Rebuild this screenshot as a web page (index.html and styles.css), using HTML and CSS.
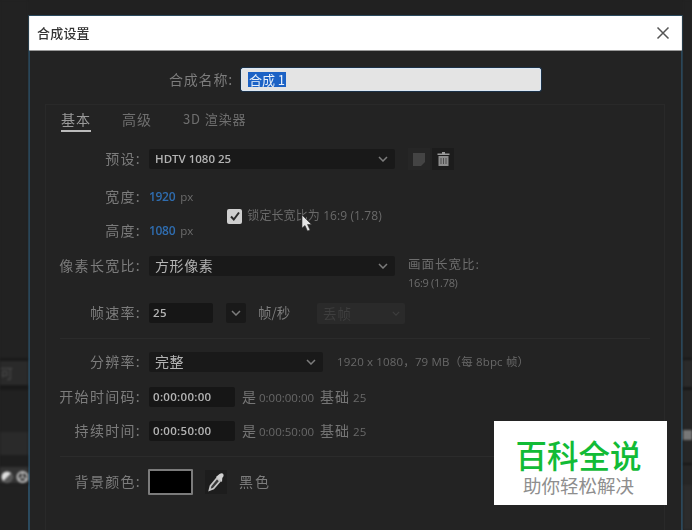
FILE: index.html
```html
<!DOCTYPE html>
<html lang="zh-CN">
<head>
<meta charset="utf-8">
<title>合成设置</title>
<link rel="stylesheet" href="styles.css">
</head>
<body>
<div class="screen">
  <aside class="strip strip-left">
    <div class="band band-a"></div>
    <div class="band band-tab"><span class="ghost">可</span></div>
    <div class="band band-b"></div>
    <div class="band band-c"></div>
    <div class="band band-d"></div>
    <div class="band band-icons">
      <svg width="28" height="16" viewBox="0 0 28 16"><circle cx="7" cy="8" r="5.500" fill="#e0e0e0"/><path d="M3.200 12 11 4.200A5.500 5.500 0 0 1 3.200 12Z" fill="#555"/><circle cx="22.500" cy="8" r="5" fill="none" stroke="#c4c4c4" stroke-width="2"/><path d="M22.500 8V3M22.500 8 18 11M22.500 8 27 11" stroke="#c4c4c4" stroke-width="1.300" fill="none"/></svg>
    </div>
  </aside>

  <main class="dialog">
    <header class="titlebar">
      <span class="title">合成设置</span>
      <svg class="close" width="14" height="14" viewBox="0 0 14 14"><path d="M1.500 1.500 12.500 12.500M12.500 1.500 1.500 12.500" stroke="#555" stroke-width="1.500" fill="none"/></svg>
    </header>

    <div class="content">
      <div class="name-row">
        <span class="label name-label">合成名称:</span>
        <div class="name-input"><span class="selected">合成 1</span></div>
      </div>

      <section class="panel">
        <nav class="tabs">
          <span class="tab tab-active">基本</span>
          <span class="tab">高级</span>
          <span class="tab tab-3d">3D 渲染器</span>
        </nav>

        <div class="row row-preset">
          <span class="label">预设:</span>
          <div class="select select-wide"><span>HDTV 1080 25</span>
            <svg class="chev" width="10" height="6" viewBox="0 0 10 6"><path d="M1 1 5 5 9 1" stroke="#7c7c7c" stroke-width="1.500" fill="none"/></svg>
          </div>
          <div class="icon-group">
            <span class="icon-btn">
              <svg width="14" height="16" viewBox="0 0 14 16"><path d="M1 2H13V11L9 15H1Z" fill="#444"/></svg>
            </span>
            <span class="icon-btn icon-btn-dark">
              <svg width="13" height="16" viewBox="0 0 13 16"><path d="M5 1H8V2.500H12.500V4H.5V2.500H5Z" fill="#9a9a9a"/><path d="M1.500 5H11.500V15H1.500Z" fill="#8c8c8c"/><path d="M4 7V13M6.500 7V13M9 7V13" stroke="#3c3c3c" stroke-width=".8"/></svg>
            </span>
          </div>
        </div>

        <div class="dims">
          <div class="dims-col">
            <div class="row">
              <span class="label">宽度:</span>
              <span class="value-blue">1920</span><span class="unit">px</span>
            </div>
            <div class="row row-height">
              <span class="label">高度:</span>
              <span class="value-blue">1080</span><span class="unit">px</span>
            </div>
          </div>
          <div class="lock">
            <span class="checkbox">
              <svg width="12" height="11" viewBox="0 0 12 11"><path d="M2 5.500 4.800 8.500 10 1.500" stroke="#2b2b2b" stroke-width="2" fill="none"/></svg>
            </span>
            <span class="lock-text">锁定长宽比为 16:9 (1.78)</span>
          </div>
        </div>

        <div class="row row-aspect">
          <span class="label">像素长宽比:</span>
          <div class="select select-wide"><span class="cjk-value">方形像素</span>
            <svg class="chev" width="10" height="6" viewBox="0 0 10 6"><path d="M1 1 5 5 9 1" stroke="#7c7c7c" stroke-width="1.500" fill="none"/></svg>
          </div>
          <div class="frame-aspect">
            <span class="frame-title">画面长宽比:</span>
            <span class="frame-value">16:9 (1.78)</span>
          </div>
        </div>

        <div class="row row-rate">
          <span class="label">帧速率:</span>
          <div class="field field-rate">25</div>
          <div class="mini-drop">
            <svg width="10" height="6" viewBox="0 0 10 6"><path d="M1 1 5 5 9 1" stroke="#7c7c7c" stroke-width="1.500" fill="none"/></svg>
          </div>
          <span class="fps">帧/秒</span>
          <div class="drop-disabled"><span>丢帧</span>
            <svg width="8" height="5" viewBox="0 0 10 6"><path d="M1 1 5 5 9 1" stroke="#3e3e3e" stroke-width="1.500" fill="none"/></svg>
          </div>
        </div>

        <div class="divider divider-one"></div>

        <div class="row row-res">
          <span class="label">分辨率:</span>
          <div class="select select-res"><span class="cjk-value">完整</span>
            <svg class="chev" width="10" height="6" viewBox="0 0 10 6"><path d="M1 1 5 5 9 1" stroke="#7c7c7c" stroke-width="1.500" fill="none"/></svg>
          </div>
          <span class="res-info">1920 x 1080，79 MB（每 8bpc 帧）</span>
        </div>

        <div class="row row-start">
          <span class="label">开始时间码:</span>
          <div class="field field-time">0:00:00:00</div>
          <span class="time-info"><b>是</b> 0:00:00:00 <b class="base">基础</b> 25</span>
        </div>

        <div class="row row-dur">
          <span class="label">持续时间:</span>
          <div class="field field-time">0:00:50:00</div>
          <span class="time-info"><b>是</b> 0:00:50:00 <b class="base">基础</b> 25</span>
        </div>

        <div class="divider divider-two"></div>

        <div class="row row-bg">
          <span class="label">背景颜色:</span>
          <div class="swatch"></div>
          <span class="dropper">
            <svg width="18" height="20" viewBox="0 0 18 20"><path d="M10 6 3.500 14 2.500 18 6.500 16.500 13 9Z" fill="#3a3a3a" stroke="#c4c4c4" stroke-width="1.800"/><path d="M9.500 4.500 12.500 2Q15 .5 16.300 2 17.500 4 15.300 6L15 10 9 5Z" fill="#cfcfcf"/></svg>
          </span>
          <span class="bg-name">黑色</span>
        </div>
      </section>
    </div>

    <svg class="cursor" width="12" height="18" viewBox="0 0 12 18"><path d="M1 1V14L4 11.500 6.500 17 9 16 6.500 10.500H10.500Z" fill="#e4e4e4" stroke="#333" stroke-width=".6"/></svg>
  </main>

  <aside class="strip strip-right">
    <div class="rband rband-a"></div>
    <div class="rband rband-b"></div>
    <div class="rband rband-c"></div>
    <div class="rband rband-d"></div>
    <div class="rband rband-e"></div>
    <div class="rband rband-f"></div>
  </aside>

  <div class="watermark">
    <span class="wm-title">百科全说</span>
    <span class="wm-sub">助你轻松解决</span>
  </div>
</div>
</body>
</html>
```

FILE: styles.css
```css
* { box-sizing: border-box; }

html, body {
  margin: 0;
  padding: 0;
  background: #212121;
}

body {
  font-family: "Open Sans", "Noto Sans CJK SC", sans-serif;
  color: #8a8a8a;
}

.screen {
  position: relative;
  display: flex;
  width: 692px;
  height: 530px;
  overflow: hidden;
  background: #212121;
}

/* background app strips */
.strip {
  flex: none;
  display: flex;
  flex-direction: column;
  filter: blur(0.8px);
}

.strip-left { width: 28px; }
.strip-right { width: 9px; }

.band-a { height: 358px; background: #222; }
.band-tab {
  height: 27px;
  background: #2a2a2a;
  border-top: 3px solid #191919;
  color: #4c4c4c;
  font: 13px/24px "Noto Sans CJK SC", sans-serif;
  padding-left: 4px;
  overflow: hidden;
}
.ghost { display: block; margin-left: -4px; }
.band-b { height: 5px; background: #191919; }
.band-c { height: 42px; background: #212121; }
.band-d { height: 23px; background: #2a2a2a; }
.band-icons {
  height: 30px;
  padding-top: 14px;
  background: linear-gradient(#1e1e1e 0 12px, #333 12px 28px, #1e1e1e 28px);
  display: flex;
}

.rband-a { height: 358px; background: #222; }
.rband-b { height: 29px; background: #2a2a2a; border-top: 2px solid #171717; }
.rband-c { height: 43px; background: #262626; border-top: 3px solid #171717; }
.rband-d { height: 10px; background: #777; }
.rband-e { height: 23px; background: #262626; }
.rband-f { flex: 1; background: #2c2c2c; border-top: 2px solid #171717; box-shadow: inset 0 20px 0 #262626; }

/* dialog */
.dialog {
  flex: none;
  width: 655px;
  margin-top: 15px;
  background: #232323;
  border: solid #2b4a5e;
  border-width: 1px 2px 0 2px;
  display: flex;
  flex-direction: column;
}

.titlebar {
  flex: none;
  height: 35px;
  margin: 0 -1px 0 -1px;
  padding: 0 12px 0 8px;
  background: #fff;
  border-bottom: 1px solid #999;
  display: flex;
  align-items: center;
  justify-content: space-between;
}

.title {
  color: #333;
  font: 500 13px/18px "Noto Sans CJK SC", sans-serif;
  letter-spacing: .2px;
  filter: blur(0.5px);
}

.content {
  flex: 1;
  padding: 17px 16px 0 15px;
  filter: blur(0.65px);
}

.label {
  color: #7c7c7c;
  font: 14px/18px "Noto Sans CJK SC", sans-serif;
  letter-spacing: 1.300px;
  padding-bottom: 2px;
  white-space: nowrap;
}

.name-row {
  display: flex;
  align-items: center;
  gap: 8px;
  height: 23px;
  padding-left: 124px;
}

.name-label { letter-spacing: .8px; }

.name-input {
  width: 300px;
  height: 23px;
  padding: 3px 6px;
  background: #e4e4e4;
  border: 1px solid #dbe7f3;
  border-radius: 2px;
  box-shadow: 0 0 0 1px #1b3046;
  display: flex;
  align-items: stretch;
}

.selected {
  background: #1c62c5;
  color: #e8f0fa;
  font: 13px/15px "Noto Sans CJK SC", sans-serif;
  padding: 0 1px;
}

.panel {
  height: 500px;
  margin-top: 13px;
  border: 1px solid #292929;
  border-bottom: 0;
}

.tabs {
  display: flex;
  padding: 5px 0 0 15px;
}

.tab {
  height: 22px;
  margin-right: 31px;
  color: #6f6f6f;
  font: 14px/18px "Noto Sans CJK SC", sans-serif;
  letter-spacing: 1px;
  white-space: nowrap;
}

.tab-active {
  color: #9a9a9a;
  border-bottom: 2px solid #bbb;
}

.tab-3d { font-size: 13px; letter-spacing: .9px; }

.row {
  display: flex;
  align-items: center;
  height: 20px;
}

.row > .label {
  flex: none;
  width: 95px;
  margin-right: 8px;
  text-align: right;
}

.row-preset { margin-top: 17px; }
.row-height { margin-top: 14px; }
.row-aspect { margin-top: 15px; position: relative; }
.row-rate { margin-top: 27px; }
.row-res { margin-top: 13px; }
.row-start { margin-top: 15px; }
.row-dur { margin-top: 14px; }
.row-bg { margin-top: 12px; height: 26px; }

.select {
  flex: none;
  height: 20px;
  padding: 0 7px 0 6px;
  background: #191919;
  border-radius: 2px;
  color: #b4b4b4;
  font: 600 11.500px/20px "Open Sans", "Noto Sans CJK SC", sans-serif;
  display: flex;
  align-items: center;
  justify-content: space-between;
}

.select-wide { width: 246px; }
.select-res { width: 174px; }

.cjk-value {
  font: 14px/18px "Noto Sans CJK SC", sans-serif;
  letter-spacing: .6px;
  padding-bottom: 2px;
}

.icon-group {
  display: flex;
  margin-left: 13px;
  height: 22px;
  gap: 2px;
}

.icon-btn {
  width: 22px;
  height: 22px;
  background: #262626;
  display: flex;
  align-items: center;
  justify-content: center;
}

.icon-btn-dark { background: #1c1c1c; }

.dims {
  display: flex;
  margin-top: 18px;
}

.dims-col { flex: none; }

.value-blue {
  color: #2f6db0;
  font: 600 12px/20px "Open Sans", sans-serif;
  letter-spacing: -.3px;
}

.unit {
  margin-left: 5px;
  color: #6c6c6c;
  font: 11.500px/20px "Open Sans", sans-serif;
}

.lock {
  position: relative;
  display: flex;
  align-items: center;
  gap: 5px;
  height: 20px;
  margin: 19px 0 0 34px;
}

.checkbox {
  flex: none;
  width: 15px;
  height: 15px;
  background: #cfcfcf;
  border-radius: 2px;
  display: flex;
  align-items: center;
  justify-content: center;
}

.lock-text {
  color: #6a6a6a;
  font: 12px/18px "Open Sans", "Noto Sans CJK SC", sans-serif;
  letter-spacing: .1px;
  white-space: nowrap;
}

.frame-aspect {
  display: flex;
  flex-direction: column;
  align-self: flex-start;
  margin: -1px 0 0 13px;
  gap: 1px;
  color: #6d6d6d;
  white-space: nowrap;
}

.frame-title {
  font: 12.500px/18px "Noto Sans CJK SC", sans-serif;
  letter-spacing: 1px;
}

.frame-value {
  font: 11px/18px "Open Sans", sans-serif;
  letter-spacing: -.3px;
}

.field {
  flex: none;
  height: 20px;
  background: #161616;
  border-radius: 2px;
  color: #b4b4b4;
  font: 600 11.500px/20px "Open Sans", sans-serif;
  padding: 0 4px;
  letter-spacing: .3px;
}

.field-rate { width: 64px; }
.field-time { width: 86px; }

.mini-drop {
  flex: none;
  width: 20px;
  height: 20px;
  margin-left: 13px;
  background: #191919;
  border-radius: 2px;
  display: flex;
  align-items: center;
  justify-content: center;
}

.fps {
  flex: none;
  width: 59px;
  margin-left: 12px;
  color: #7c7c7c;
  font: 13.500px/18px "Noto Sans CJK SC", sans-serif;
  padding-bottom: 2px;
}

.drop-disabled {
  flex: none;
  width: 88px;
  height: 21px;
  padding: 0 5px 0 6px;
  background: #2a2a2a;
  border-radius: 2px;
  color: #3e3e3e;
  font: 13.500px/21px "Noto Sans CJK SC", sans-serif;
  letter-spacing: 1px;
  display: flex;
  align-items: center;
  justify-content: space-between;
}

.divider {
  height: 1px;
  margin: 0 14px;
  background: #2b2b2b;
}

.divider-one { margin-top: 15px; }
.divider-two { margin-top: 15px; }

.res-info {
  margin-left: 14px;
  color: #686868;
  font: 11.500px/20px "Open Sans", "Noto Sans CJK SC", sans-serif;
  letter-spacing: .15px;
  white-space: nowrap;
}

.time-info {
  margin-left: 7px;
  color: #686868;
  font: 11.500px/20px "Open Sans", "Noto Sans CJK SC", sans-serif;
  white-space: nowrap;
}

.time-info b {
  font: 400 14px/20px "Noto Sans CJK SC", sans-serif;
  color: #757575;
}

.time-info .base { margin-left: 3px; letter-spacing: 1px; }

.swatch {
  flex: none;
  width: 45px;
  height: 26px;
  margin-left: -1px;
  background: #000;
  border: 2px solid #7b7b7b;
  border-radius: 1px;
}

.dropper {
  flex: none;
  width: 22px;
  height: 24px;
  margin-left: 12px;
  background: #1d1d1d;
  display: flex;
  align-items: center;
  justify-content: center;
}

.bg-name {
  margin-left: 12px;
  color: #7c7c7c;
  font: 14px/18px "Noto Sans CJK SC", sans-serif;
  padding-bottom: 2px;
  letter-spacing: 2px;
}

/* overlays */
.cursor {
  position: absolute;
  left: 301px;
  top: 214px;
}

.watermark {
  position: absolute;
  left: 494px;
  top: 421px;
  width: 173px;
  height: 84px;
  padding: 17px 4px 0 0;
  background: #fff;
  display: flex;
  flex-direction: column;
  align-items: center;
}

.wm-title {
  color: #12bb36;
  font: 500 31.500px/32px "Noto Sans CJK SC", sans-serif;
  white-space: nowrap;
}

.wm-sub {
  color: #8e8e8e;
  font: 18.500px/24px "Noto Sans CJK SC", sans-serif;
  white-space: nowrap;
  margin-top: 3px;
}
```
